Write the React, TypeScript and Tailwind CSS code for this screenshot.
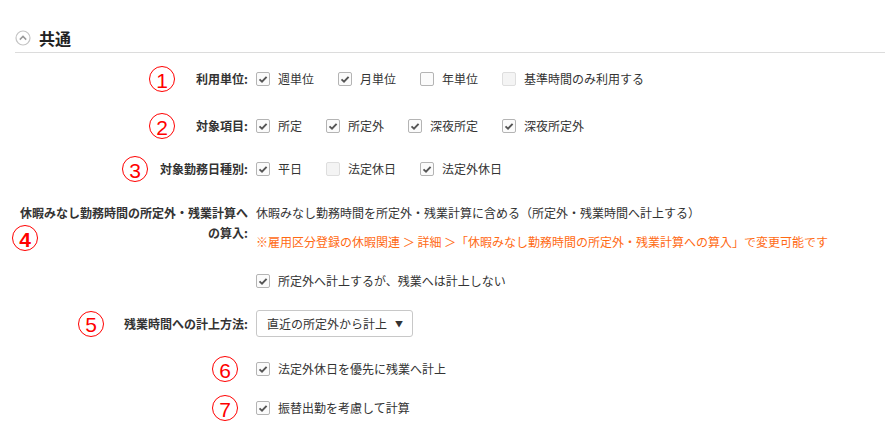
import React from "react";

type Opt = { label: string; checked?: boolean; disabled?: boolean };

const font = { fontFamily: '"Noto Sans CJK JP", "Noto Sans", sans-serif' };

// red numbered circle used as a step marker
function Mark({ n }: { n: string }) {
  return (
    <div className="w-[26px] h-[26px] shrink-0 rounded-full border-[1.5px] border-[#ff0000] flex items-center justify-center text-[#ff0000] text-[21px] leading-none font-['Liberation_Sans',sans-serif]">
      <span className="translate-y-[0.5px]">{n}</span>
    </div>
  );
}

function Check({ checked, disabled }: { checked?: boolean; disabled?: boolean }) {
  return (
    <span
      className={
        "w-[14px] h-[14px] shrink-0 rounded-[2px] border flex items-center justify-center " +
        (disabled ? "border-[#dedede] bg-[#f4f4f4]" : "border-[#b4b4b4] bg-[#fbfbfb]")
      }
    >
      {checked && (
        <svg width="10" height="10" viewBox="0 0 10 10">
          <path d="M1.5 5.4 L4 7.7 L8.6 2.8" fill="none" stroke="#555" strokeWidth="1.9" />
        </svg>
      )}
    </span>
  );
}

function Options({ items }: { items: Opt[] }) {
  return (
    <div className="flex items-center gap-[24px]">
      {items.map((o) => (
        <label key={o.label} className="flex items-center gap-[8px] text-[12px] text-[#333] leading-none">
          <Check checked={o.checked} disabled={o.disabled} />
          <span>{o.label}</span>
        </label>
      ))}
    </div>
  );
}

function Label({ children, mark, gap }: { children: React.ReactNode; mark?: string; gap: string }) {
  return (
    <div className="flex items-center justify-end">
      {mark && (
        <div style={{ marginRight: gap }}>
          <Mark n={mark} />
        </div>
      )}
      <span className="text-[12px] font-bold text-[#333] leading-none">{children}</span>
    </div>
  );
}

export default function App() {
  return (
    <div className="w-[885px] h-[447px] bg-white overflow-hidden" style={font}>
      {/* section header */}
      <div className="ml-[15px] pt-[27px] pb-[4px] border-b border-[#dcdcdc]">
        <div className="flex items-center h-[21px] gap-[8px]">
          <svg width="16" height="16" viewBox="0 0 16 16">
            <circle cx="8" cy="8" r="7" fill="#fff" stroke="#c4c4c4" strokeWidth="1.2" />
            <path d="M4.8 9.6 L8 6.4 L11.2 9.6" fill="none" stroke="#999" strokeWidth="1.5" />
          </svg>
          <span className="text-[16px] font-bold text-[#222] leading-none">共通</span>
        </div>
      </div>

      <div className="grid grid-cols-[248px_1fr] gap-x-2 mt-[13px] h-[26px] items-center">
        <Label mark="1" gap="21px">利用単位:</Label>
        <Options
          items={[
            { label: "週単位", checked: true },
            { label: "月単位", checked: true },
            { label: "年単位" },
            { label: "基準時間のみ利用する", disabled: true },
          ]}
        />
      </div>

      <div className="grid grid-cols-[248px_1fr] gap-x-2 mt-[21px] h-[26px] items-center">
        <Label mark="2" gap="21px">対象項目:</Label>
        <Options
          items={[
            { label: "所定", checked: true },
            { label: "所定外", checked: true },
            { label: "深夜所定", checked: true },
            { label: "深夜所定外", checked: true },
          ]}
        />
      </div>

      <div className="grid grid-cols-[248px_1fr] gap-x-2 mt-[17px] h-[26px] items-center">
        <Label mark="3" gap="12px">対象勤務日種別:</Label>
        <Options
          items={[
            { label: "平日", checked: true },
            { label: "法定休日", disabled: true },
            { label: "法定外休日", checked: true },
          ]}
        />
      </div>

      <div className="grid grid-cols-[248px_1fr] gap-x-2 mt-[21px]">
        <div className="relative text-right text-[12px] font-bold text-[#333] leading-[20px]">
          休暇みなし勤務時間の所定外・残業計算へ
          <br />
          の算入:
          <div className="absolute left-[12px] top-[22px]">
            <Mark n="4" />
          </div>
        </div>
        <div className="flex flex-col">
          <div className="text-[12px] text-[#333] leading-[20px]">
            休暇みなし勤務時間を所定外・残業計算に含める（所定外・残業時間へ計上する）
          </div>
          <div className="mt-[9px] text-[12px] text-[#ff6a13] leading-[20px]">
            ※雇用区分登録の休暇関連 ＞ 詳細 ＞「休暇みなし勤務時間の所定外・残業計算への算入」で変更可能です
          </div>
          <div className="mt-[19px] h-[20px] flex items-center">
            <Options items={[{ label: "所定外へ計上するが、残業へは計上しない", checked: true }]} />
          </div>
        </div>
      </div>

      <div className="grid grid-cols-[248px_1fr] gap-x-2 mt-[19px] items-center">
        <Label mark="5" gap="20px">残業時間への計上方法:</Label>
        <div className="w-[157px] h-[27px] border border-[#c8c8c8] rounded-[3px] bg-white flex items-center justify-between pl-[10px] pr-[9px] text-[12px] text-[#333]">
          <span className="leading-none">直近の所定外から計上</span>
          <span className="text-[8px] leading-none">▼</span>
        </div>
      </div>

      <div className="grid grid-cols-[248px_1fr] gap-x-2 mt-[19px] h-[26px] items-center">
        <div className="flex justify-end pr-[10px]">
          <Mark n="6" />
        </div>
        <Options items={[{ label: "法定外休日を優先に残業へ計上", checked: true }]} />
      </div>

      <div className="grid grid-cols-[248px_1fr] gap-x-2 mt-[13px] h-[26px] items-center">
        <div className="flex justify-end pr-[10px]">
          <Mark n="7" />
        </div>
        <Options items={[{ label: "振替出勤を考慮して計算", checked: true }]} />
      </div>
    </div>
  );
}
